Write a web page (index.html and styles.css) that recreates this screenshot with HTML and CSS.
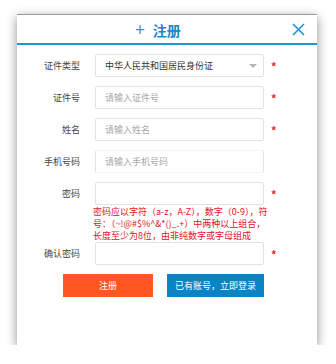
FILE: index.html
```html
<!DOCTYPE html>
<html lang="zh-CN">
<head>
    <meta charset="UTF-8">
    <meta name="viewport" content="width=device-width, initial-scale=1.0">
    <title>注册</title>
    <link rel="stylesheet" href="styles.css">
</head>
<body>

    <div class="dialog">
        <div class="head">
            <span class="title"><span class="plus">+</span> 注册</span>
            <span class="close">
                <svg width="13" height="13" viewBox="0 0 13 13">
                    <path d="M1 1 L12 12 M12 1 L1 12" stroke="#1a8ed0" stroke-width="1.5" fill="none"/>
                </svg>
            </span>
        </div>

        <div class="form">
            <div class="row">
                <label>证件类型</label>
                <div class="field select">中华人民共和国居民身份证<span class="arrow"></span></div>
                <span class="star">*</span>
            </div>
            <div class="row">
                <label>证件号</label>
                <input class="field" type="text" placeholder="请输入证件号">
                <span class="star">*</span>
            </div>
            <div class="row">
                <label>姓名</label>
                <input class="field" type="text" placeholder="请输入姓名">
                <span class="star">*</span>
            </div>
            <div class="row">
                <label>手机号码</label>
                <input class="field light" type="text" placeholder="请输入手机号码">
                <span class="star"></span>
            </div>
            <div class="row tight">
                <label>密码</label>
                <input class="field" type="password">
                <span class="star">*</span>
            </div>
            <div class="hint">密码应以字符（a-z，A-Z），数字（0-9），符号：（~!@#$%^&amp;*()_.+）中两种以上组合，长度至少为8位，由非纯数字或字母组成</div>
            <div class="row">
                <label>确认密码</label>
                <input class="field" type="password">
                <span class="star">*</span>
            </div>

            <div class="buttons">
                <button type="button" class="btn btn-reg">注册</button>
                <button type="button" class="btn btn-login">已有账号，立即登录</button>
            </div>
        </div>
    </div>

</body>
</html>
```

FILE: styles.css
```css
body {
    margin: 0;
    background-color: white;
    font-family: "Noto Sans CJK SC", "Liberation Sans", sans-serif;
}

.dialog {
    width: 300px;
    height: 331px;
    margin: 14px 0 0 17px;
    background-color: white;
    border-top: 1px solid #9a9a9a;
    box-sizing: border-box;
    box-shadow: 0px 3px 10px rgba(0, 0, 0, 0.45);
}

.head {
    position: relative;
    height: 28px;
    border-bottom: 2px solid #1a9ad6;
    text-align: center;
}

.title {
    display: inline-block;
    margin-right: 18px;
    line-height: 28px;
    font-size: 14px;
    font-weight: bold;
    color: #1587c8;
}

.plus {
    font-weight: normal;
    font-size: 17px;
    color: #3d8fc0;
    margin-right: 5px;
}

.close {
    position: absolute;
    right: 12px;
    top: 8px;
    line-height: 0;
}

.form {
    padding-top: 9px;
}

.row {
    display: grid;
    grid-template-columns: 63px 169px 10px;
    column-gap: 15px;
    align-items: center;
    margin-bottom: 9px;
}

.row.tight {
    margin-bottom: 0;
}

.row label {
    text-align: right;
    font-size: 9px;
    color: #444;
}

.field {
    height: 23px;
    box-sizing: border-box;
    border: 1px solid #e2e2e2;
    border-radius: 2px;
    padding: 0 9px;
    font-family: inherit;
    font-size: 9px;
    color: #333;
    outline: none;
}

.field.light {
    border-top-color: #f4f4f4;
    border-bottom-color: #f4f4f4;
}

.field::placeholder {
    color: #a8a8a8;
}

.select {
    position: relative;
    line-height: 21px;
}

.arrow {
    position: absolute;
    right: 6px;
    top: 9px;
    border-left: 4px solid transparent;
    border-right: 4px solid transparent;
    border-top: 4px solid #b5b5b5;
}

.star {
    margin-left: -8px;
    color: #ff1a1a;
    font-size: 11px;
    font-weight: bold;
}

.hint {
    margin: 1px 0 0 76px;
    width: 180px;
    height: 36px;
    font-size: 9px;
    line-height: 12px;
    color: #e8102a;
}

.buttons {
    display: flex;
    gap: 14px;
    margin: 0 0 0 46px;
}

.btn {
    height: 23px;
    border: none;
    border-radius: 0;
    color: white;
    font-family: inherit;
    font-size: 9px;
    cursor: pointer;
}

.btn-reg {
    width: 90px;
    background-color: #ff5722;
}

.btn-login {
    width: 97px;
    background-color: #0a84c4;
}
```
